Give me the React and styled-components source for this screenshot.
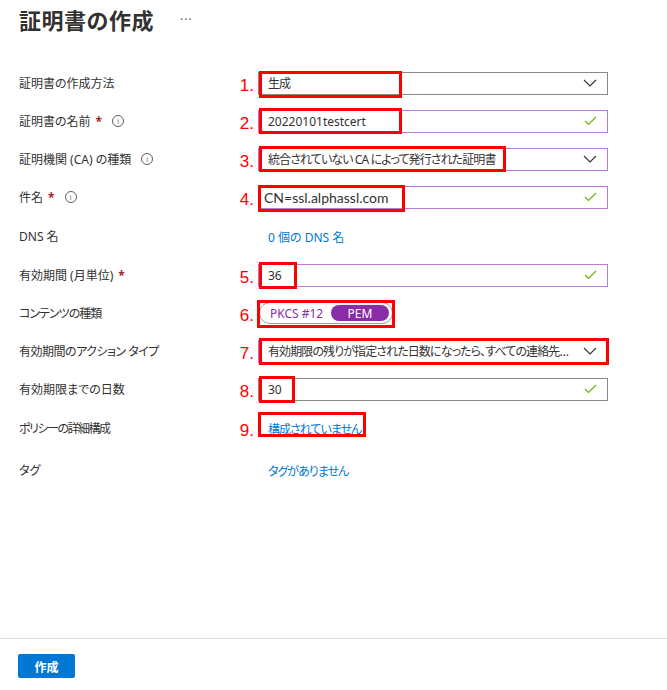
import React from 'react'
import styled, { createGlobalStyle } from 'styled-components'

const GlobalStyle = createGlobalStyle`
  body {
    margin: 0;
    background: #fff;
    font-family: "Noto Sans", "Noto Sans CJK JP", sans-serif;
    font-feature-settings: "palt";
    color: #323130;
  }
`

const Page = styled.div`
  width: 667px;
  height: 690px;
  display: flex;
  flex-direction: column;
  background: #fff;
`

const Header = styled.div`
  display: flex;
  align-items: flex-start;
  gap: 26px;
  padding: 4px 0 0 19px;
  height: 60px;
`

const Title = styled.h1`
  margin: 0;
  font-size: 22px;
  font-weight: 700;
  line-height: 32px;
  letter-spacing: 0.5px;
  font-feature-settings: normal;
  color: #323130;
`

const More = styled.span`
  font-size: 12px;
  line-height: 32px;
  color: #605e5c;
  letter-spacing: 1px;
`

const Form = styled.div`
  display: flex;
  flex-direction: column;
  flex: 1;
`

const Row = styled.div`
  display: grid;
  grid-template-columns: 217px 22px 350px;
  align-items: center;
  padding-left: 19px;
  height: ${p => p.$h || 38}px;
`

const Label = styled.div`
  display: flex;
  align-items: center;
  font-size: 12px;
  color: #323130;
  letter-spacing: ${p => p.$ls || 0}px;
`

const Star = styled.span`
  color: #a4262c;
  font-weight: 700;
  margin-left: 5px;
`

const Info = styled.span`
  width: 10px;
  height: 10px;
  border: 1px solid #605e5c;
  border-radius: 50%;
  display: inline-flex;
  align-items: center;
  justify-content: center;
  font-size: 7px;
  line-height: 1;
  color: #605e5c;
  margin-left: 10px;
`

const Num = styled.div`
  color: #ff0000;
  font-family: "Liberation Sans", "Noto Sans", sans-serif;
  font-size: 17px;
  text-align: right;
  padding-right: 4px;
  line-height: 1;
  padding-top: 4px;
`

const Field = styled.div`
  position: relative;
  height: 23px;
  box-sizing: border-box;
  border: 1px solid ${p => (p.$valid ? '#b47cd6' : '#8a8886')};
  display: flex;
  align-items: center;
  padding: 0 10px 0 ${p => (p.$big ? 5 : 9)}px;
  font-family: ${p => (p.$big ? '"Lato", "Noto Sans", sans-serif' : 'inherit')};
  font-size: ${p => (p.$big ? 14 : 12)}px;
  color: #323130;
`

const FieldText = styled.span`
  flex: 1;
  white-space: nowrap;
  overflow: hidden;
  text-overflow: ellipsis;
  padding-right: 6px;
  letter-spacing: ${p => (p.$jp ? -0.9 : 0)}px;
`

const Mark = styled.div`
  position: absolute;
  border: 3px solid #ff0000;
  box-sizing: border-box;
  pointer-events: none;
  top: ${p => p.$top ?? -2}px;
  left: ${p => p.$left ?? 0}px;
  width: ${p => p.$w}px;
  height: ${p => p.$h ?? 27}px;
`

const LinkText = styled.span`
  position: relative;
  display: inline-block;
  color: #0078d4;
  font-size: 12px;
  padding-left: 10px;
  letter-spacing: ${p => (p.$jp ? -1 : 0)}px;
`

const LinkCell = styled.div`
  position: relative;
`

const Toggle = styled.div`
  position: relative;
  width: 134px;
  height: 22px;
  box-sizing: border-box;
  border: 1px solid #a19f9d;
  border-radius: 11px;
  display: flex;
  align-items: center;
  justify-content: space-between;
  padding: 0 3px 0 10px;
  margin-left: 1px;
  font-size: 12px;
`

const ToggleOff = styled.span`
  color: #8a2ba8;
`

const ToggleOn = styled.span`
  background: #8a2ba8;
  color: #fff;
  border-radius: 8px;
  width: 58px;
  height: 16px;
  display: flex;
  align-items: center;
  justify-content: center;
  font-size: 12px;
`

const Footer = styled.div`
  height: 52px;
  border-top: 1px solid #dcdcdc;
  box-sizing: border-box;
  padding: 15px 0 0 18px;
`

const Button = styled.button`
  width: 57px;
  height: 24px;
  border: none;
  border-radius: 2px;
  background: #0078d4;
  color: #fff;
  font-family: "Noto Sans CJK JP", sans-serif;
  font-size: 12px;
  font-weight: 700;
  padding: 0;
`

const Chevron = () => (
  <svg width="14" height="8" viewBox="0 0 14 8" fill="none">
    <path d="M1 1l6 6 6-6" stroke="#323130" strokeWidth="1.1" />
  </svg>
)

const Check = () => (
  <svg width="13" height="10" viewBox="0 0 13 10" fill="none">
    <path d="M1 5l3.5 3.5L12 1" stroke="#6bb700" strokeWidth="1.2" />
  </svg>
)

const App = () => {
  return (
    <Page>
      <GlobalStyle />
      <Header>
        <Title>証明書の作成</Title>
        <More>···</More>
      </Header>
      <Form>
        <Row>
          <Label>証明書の作成方法</Label>
          <Num>1.</Num>
          <Field>
            <FieldText $jp>生成</FieldText>
            <Chevron />
            <Mark $w={143} />
          </Field>
        </Row>
        <Row>
          <Label>証明書の名前<Star>*</Star><Info>i</Info></Label>
          <Num>2.</Num>
          <Field $valid>
            <FieldText>20220101testcert</FieldText>
            <Check />
            <Mark $w={143} $top={-3} $h={26} />
          </Field>
        </Row>
        <Row>
          <Label>証明機関 (CA) の種類<Info>i</Info></Label>
          <Num>3.</Num>
          <Field $valid>
            <FieldText $jp>統合されていない CA によって発行された証明書</FieldText>
            <Chevron />
            <Mark $w={247} $top={-3} $h={26} />
          </Field>
        </Row>
        <Row>
          <Label>件名<Star>*</Star><Info>i</Info></Label>
          <Num>4.</Num>
          <Field $valid $big>
            <FieldText>CN=ssl.alphassl.com</FieldText>
            <Check />
            <Mark $w={147} $left={-1} $top={-2} />
          </Field>
        </Row>
        <Row $h={40}>
          <Label>DNS 名</Label>
          <span />
          <LinkCell>
            <LinkText>0 個の DNS 名</LinkText>
          </LinkCell>
        </Row>
        <Row>
          <Label>有効期間 (月単位)<Star>*</Star></Label>
          <Num>5.</Num>
          <Field $valid>
            <FieldText>36</FieldText>
            <Check />
            <Mark $w={38} $top={-3} />
          </Field>
        </Row>
        <Row>
          <Label $ls={-1}>コンテンツの種類</Label>
          <Num>6.</Num>
          <div>
            <Toggle>
              <ToggleOff>PKCS #12</ToggleOff>
              <ToggleOn>PEM</ToggleOn>
              <Mark $w={138} $left={-3} $top={-3} $h={28} />
            </Toggle>
          </div>
        </Row>
        <Row>
          <Label $ls={-0.5}>有効期間のアクション タイプ</Label>
          <Num>7.</Num>
          <Field $valid>
            <FieldText $jp>有効期限の残りが指定された日数になったら、すべての連絡先に電子メールを送信する</FieldText>
            <Chevron />
            <Mark $w={350} $top={-3} $h={27} />
          </Field>
        </Row>
        <Row>
          <Label>有効期限までの日数</Label>
          <Num>8.</Num>
          <Field>
            <FieldText>30</FieldText>
            <Check />
            <Mark $w={36} $top={-3} />
          </Field>
        </Row>
        <Row $h={40}>
          <Label $ls={-1.5}>ポリシーの詳細構成</Label>
          <Num>9.</Num>
          <LinkCell>
            <LinkText $jp>構成されていません</LinkText>
            <Mark $w={108} $h={25} $top={-5} />
          </LinkCell>
        </Row>
        <Row $h={44}>
          <Label>タグ</Label>
          <span />
          <LinkCell>
            <LinkText $jp>タグがありません</LinkText>
          </LinkCell>
        </Row>
      </Form>
      <Footer>
        <Button>作成</Button>
      </Footer>
    </Page>
  )
}

export default App
